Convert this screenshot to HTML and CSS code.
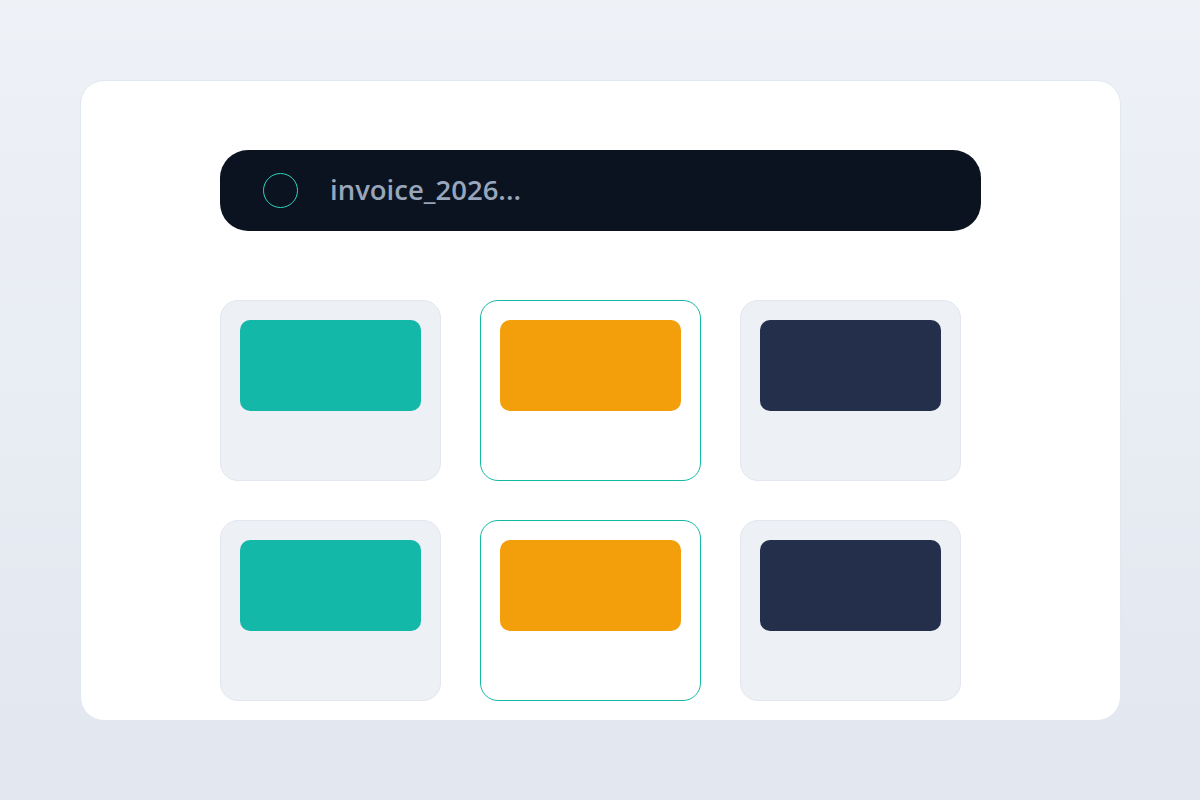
FILE: index.html
```html
<!DOCTYPE html>
<html>
<head>
<meta charset="utf-8">
<link rel="stylesheet" href="styles.css">
</head>
<body>
<div class="card">
  <div class="search">
    <span class="ring"></span>
    <span class="name">invoice_2026...</span>
  </div>
  <div class="grid">
    <div class="tile"><div class="swatch teal"></div></div>
    <div class="tile active"><div class="swatch amber"></div></div>
    <div class="tile"><div class="swatch navy"></div></div>
    <div class="tile"><div class="swatch teal"></div></div>
    <div class="tile active"><div class="swatch amber"></div></div>
    <div class="tile"><div class="swatch navy"></div></div>
  </div>
</div>
</body>
</html>
```
FILE: styles.css
```css
html, body { margin: 0; padding: 0; }
body {
  width: 1200px;
  height: 800px;
  background: linear-gradient(180deg, #eef1f6 0%, #e2e7f0 100%);
  font-family: "Open Sans", "Noto Sans", sans-serif;
  padding: 80px;
  box-sizing: border-box;
}
.card {
  box-sizing: border-box;
  width: 1041px;
  height: 641px;
  background: #ffffff;
  border: 1px solid #e2e8f0;
  border-radius: 24px;
  padding: 69px 139px 19px;
  overflow: hidden;
}
.search {
  width: 761px;
  height: 81px;
  background: #0b1220;
  border-radius: 28px;
  display: flex;
  align-items: center;
  padding-left: 43px;
  box-sizing: border-box;
}
.ring {
  width: 35px;
  height: 35px;
  border: 1px solid #2dd4bf;
  border-radius: 50%;
  box-sizing: border-box;
  flex: none;
}
.name {
  margin-left: 32px;
  color: #97a6bb;
  font-size: 27.5px;
  font-weight: 600;
  line-height: 1;
  position: relative;
  top: -1px;
}
.grid {
  margin-top: 69px;
  display: grid;
  grid-template-columns: repeat(3, 221px);
  grid-auto-rows: 181px;
  gap: 39px;
}
.tile {
  box-sizing: border-box;
  background: #edf0f5;
  border: 1px solid #e2e6ee;
  border-radius: 18px;
  padding: 19px;
}
.tile.active {
  background: #ffffff;
  border-color: #14b8a6;
}
.swatch {
  height: 91px;
  border-radius: 10px;
}
.teal { background: #14b8a8; }
.amber { background: #f39f0c; }
.navy { background: #24304b; }
```
